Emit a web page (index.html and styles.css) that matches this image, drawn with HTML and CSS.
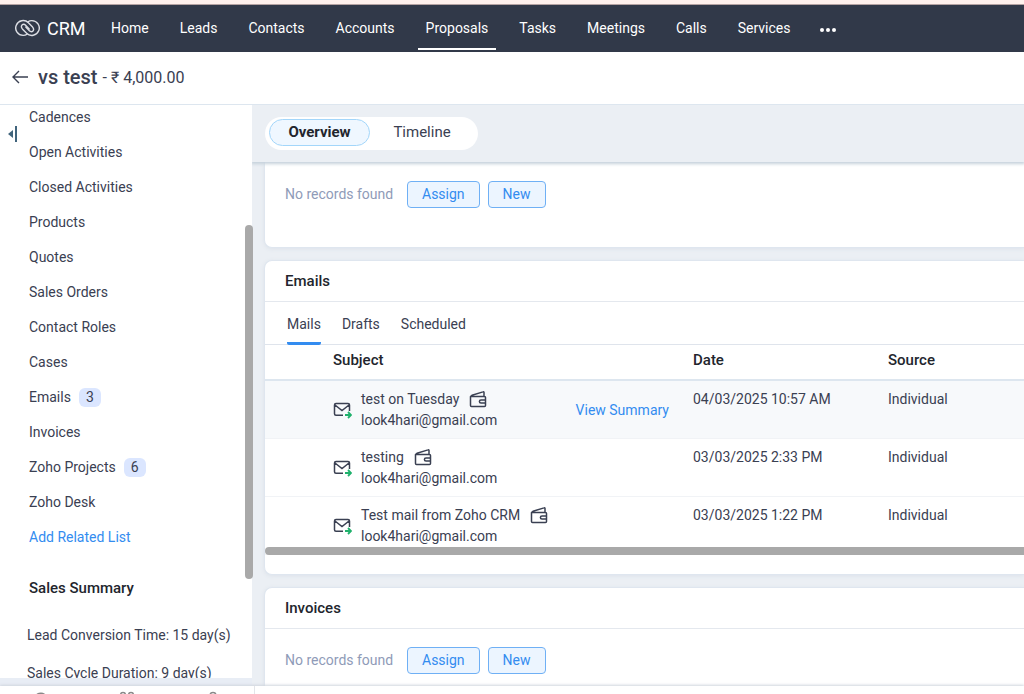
FILE: index.html
```
<!DOCTYPE html>
<html lang="en">
<head>
    <meta charset="UTF-8">
    <meta name="viewport" content="width=device-width, initial-scale=1.0">
    <title>vs test - Proposals - CRM</title>
    <link rel="stylesheet" href="styles.css">
</head>
<body>
    <!-- shared icons -->
    <svg class="sprite" aria-hidden="true">
        <symbol id="mail" viewBox="0 0 19 18">
            <path d="M10 14.200H3c-.9 0-1.500-.6-1.500-1.500V4c0-.9.6-1.500 1.500-1.500h12c.9 0 1.500.6 1.500 1.500v6M2 4l7 5.500L16 4" fill="none" stroke="#3a4052" stroke-width="1.500"/>
            <path d="M12 14h6M15 11l3 3-3 3" fill="none" stroke="#1fb16c" stroke-width="1.800"/>
        </symbol>
        <symbol id="wallet" viewBox="0 0 18 17">
            <path d="M1.500 5.500h14c.6 0 1 .4 1 1v8c0 .6-.4 1-1 1h-13c-.6 0-1-.4-1-1v-9L3 4.200l11-3.300c.6-.2 1 .1 1 .7v3.900M16 9h-4c-1 0-1.600.6-1.600 1.500S11 12 12 12h4" fill="none" stroke="#3a4052" stroke-width="1.500" stroke-linejoin="round"/>
        </symbol>
    </svg>

    <header class="navbar">
        <a href="#" class="brand">
            <svg width="25" height="18" viewBox="0 0 25 18" fill="none" stroke="#dcdee4" stroke-width="1.400" stroke-linecap="round">
                <path d="M12 15.200C10.900 16 9.600 16.400 8.200 16.400a7.400 7.400 0 1 1 5.200-12.600l4.200 4.300c2 2.200.6 4.600-1.200 4.600-.9 0-1.500-.4-2-.9L10.800 8"/>
                <path d="M13 2.800c1.100-.8 2.400-1.200 3.800-1.200a7.400 7.400 0 1 1-5.200 12.600L7.400 9.900c-2-2.200-.6-4.600 1.200-4.600.9 0 1.500.4 2 .9l3.600 3.800"/>
            </svg>
            <span>CRM</span>
        </a>
        <nav class="menu">
            <a href="#">Home</a>
            <a href="#">Leads</a>
            <a href="#">Contacts</a>
            <a href="#">Accounts</a>
            <a href="#" class="active">Proposals</a>
            <a href="#">Tasks</a>
            <a href="#">Meetings</a>
            <a href="#">Calls</a>
            <a href="#">Services</a>
        </nav>
        <button class="more" aria-label="More modules">
            <svg width="18" height="4" viewBox="0 0 18 4" fill="#fff"><circle cx="3" cy="2" r="2"/><circle cx="9" cy="2" r="2"/><circle cx="15" cy="2" r="2"/></svg>
        </button>
    </header>

    <div class="record">
        <a href="#" class="back" aria-label="Back">
            <svg width="16" height="14" viewBox="0 0 16 14" fill="none" stroke="#3a4052" stroke-width="1.400"><path d="M16 7H1M7 1L1 7l6 6"/></svg>
        </a>
        <h1>vs test</h1>
        <span class="amount">- ₹ 4,000.00</span>
    </div>

    <div class="content">
        <aside class="sidebar">
            <button class="collapse" aria-label="Hide sidebar">
                <svg width="9" height="16" viewBox="0 0 9 16" fill="#40647c"><path d="M5 4v8L0 8zM7 0h2v16H7z"/></svg>
            </button>
            <ul class="related">
                <li><a href="#">Cadences</a></li>
                <li><a href="#">Open Activities</a></li>
                <li><a href="#">Closed Activities</a></li>
                <li><a href="#">Products</a></li>
                <li><a href="#">Quotes</a></li>
                <li><a href="#">Sales Orders</a></li>
                <li><a href="#">Contact Roles</a></li>
                <li><a href="#">Cases</a></li>
                <li><a href="#">Emails</a><span class="count">3</span></li>
                <li><a href="#">Invoices</a></li>
                <li><a href="#">Zoho Projects</a><span class="count">6</span></li>
                <li><a href="#">Zoho Desk</a></li>
                <li><a href="#" class="link">Add Related List</a></li>
            </ul>
            <h3>Sales Summary</h3>
            <p class="summary">Lead Conversion Time: 15 day(s)</p>
            <p class="summary">Sales Cycle Duration: 9 day(s)</p>
            <div class="scroll-y"></div>
            <div class="fade"></div>
        </aside>

        <main class="main">
            <div class="toolbar">
                <div class="switch">
                    <button class="on">Overview</button>
                    <button>Timeline</button>
                </div>
            </div>

            <div class="cards">
                <section class="card card-first">
                    <div class="empty">
                        <span>No records found</span>
                        <button class="btn">Assign</button>
                        <button class="btn">New</button>
                    </div>
                </section>

                <section class="card">
                    <h2>Emails</h2>
                    <div class="tabs">
                        <button class="active">Mails</button>
                        <button>Drafts</button>
                        <button>Scheduled</button>
                    </div>
                    <div class="mails">
                        <table>
                            <thead>
                                <tr>
                                    <th class="col-subject">Subject</th>
                                    <th class="col-date">Date</th>
                                    <th>Source</th>
                                </tr>
                            </thead>
                            <tbody>
                                <tr class="hover">
                                    <td class="col-subject">
                                        <div class="mail">
                                            <svg class="mail-icon"><use href="#mail"/></svg>
                                            <div>
                                                <div class="title">test on Tuesday <svg class="wallet"><use href="#wallet"/></svg></div>
                                                <div>look4hari@gmail.com</div>
                                            </div>
                                            <a href="#" class="link view">View Summary</a>
                                        </div>
                                    </td>
                                    <td>04/03/2025 10:57 AM</td>
                                    <td>Individual</td>
                                </tr>
                                <tr>
                                    <td class="col-subject">
                                        <div class="mail">
                                            <svg class="mail-icon"><use href="#mail"/></svg>
                                            <div>
                                                <div class="title">testing <svg class="wallet"><use href="#wallet"/></svg></div>
                                                <div>look4hari@gmail.com</div>
                                            </div>
                                        </div>
                                    </td>
                                    <td>03/03/2025 2:33 PM</td>
                                    <td>Individual</td>
                                </tr>
                                <tr>
                                    <td class="col-subject">
                                        <div class="mail">
                                            <svg class="mail-icon"><use href="#mail"/></svg>
                                            <div>
                                                <div class="title">Test mail from Zoho CRM <svg class="wallet"><use href="#wallet"/></svg></div>
                                                <div>look4hari@gmail.com</div>
                                            </div>
                                        </div>
                                    </td>
                                    <td>03/03/2025 1:22 PM</td>
                                    <td>Individual</td>
                                </tr>
                            </tbody>
                        </table>
                        <div class="scroll-x"></div>
                    </div>
                </section>

                <section class="card">
                    <h2>Invoices</h2>
                    <div class="empty">
                        <span>No records found</span>
                        <button class="btn">Assign</button>
                        <button class="btn">New</button>
                    </div>
                </section>
            </div>
        </main>
    </div>

    <footer class="chatbar">
        <div class="chat-icons">
            <svg width="18" height="18" viewBox="0 0 18 18" fill="none" stroke="#888" stroke-width="1.500"><path d="M3 15l1-4a6 5.500 0 1 1 3 2z"/></svg>
            <svg width="18" height="18" viewBox="0 0 18 18" fill="none" stroke="#888" stroke-width="1.500"><circle cx="5" cy="4" r="2.500"/><circle cx="13" cy="4" r="2.500"/><path d="M1 14c0-6 8-6 8 0 0-6 8-6 8 0"/></svg>
            <svg width="18" height="18" viewBox="0 0 18 18" fill="none" stroke="#888" stroke-width="1.500"><circle cx="9" cy="4.500" r="3"/><path d="M2 15c0-7 14-7 14 0"/></svg>
        </div>
    </footer>
</body>
</html>
```
FILE: styles.css
```
* {
    box-sizing: border-box;
}
body {
    margin: 0;
    height: 100vh;
    display: flex;
    flex-direction: column;
    overflow: hidden;
    font-family: Roboto, "Liberation Sans", sans-serif;
    font-size: 14px;
    line-height: 21px;
    color: #3a4052;
    background-color: #fff;
}
a {
    color: inherit;
    text-decoration: none;
}
button {
    font: inherit;
    color: inherit;
    background: none;
    border: none;
    padding: 0;
    cursor: pointer;
}
h1, h2, h3, p, ul {
    margin: 0;
    padding: 0;
}
svg {
    flex-shrink: 0;
}
.sprite {
    display: none;
}
.link {
    color: #338cf0;
}

/* top bar */
.navbar {
    display: flex;
    flex-shrink: 0;
    height: 52px;
    padding-left: 15px;
    color: #fff;
    background-color: #313949;
    border-top: 4px solid #fff1ed;
    box-shadow: inset 0 1px #b5a3a3;
}
.brand {
    display: flex;
    align-items: center;
    gap: 7px;
    width: 88px;
    font-size: 18px;
}
.menu {
    display: flex;
    gap: 15px;
}
.menu a {
    padding: 14px 8px 0;
    height: 46px;
    white-space: nowrap;
}
.menu a.active {
    border-bottom: 2px solid #fff;
}
.more {
    display: flex;
    align-items: center;
    margin-left: 20px;
    padding-top: 3px;
}

/* record title */
.record {
    display: flex;
    flex-shrink: 0;
    align-items: center;
    height: 53px;
    padding: 0 12px 2px;
    border-bottom: 1px solid #dde6ef;
}
.back {
    display: flex;
    margin-right: 10px;
}
.record h1 {
    font-size: 20px;
    font-weight: 500;
    margin-right: 5px;
}
.amount {
    font-size: 16px;
}

.content {
    display: flex;
    flex: 1;
    min-height: 0;
}

/* sidebar */
.sidebar {
    position: relative;
    flex: 0 0 252px;
}
.collapse {
    position: absolute;
    left: 8px;
    top: 21px;
    display: flex;
}
.related {
    list-style: none;
    padding-left: 29px;
}
.related li {
    display: flex;
    align-items: center;
    height: 25px;
    margin-bottom: 10px;
}
.count {
    width: 22px;
    height: 19px;
    margin-left: 8px;
    line-height: 19px;
    text-align: center;
    background-color: #dbe6ff;
    border-radius: 6px;
}
.sidebar h3 {
    padding: 18px 0 26px 29px;
    font-size: 15px;
    font-weight: 500;
    color: #22252d;
}
.summary {
    padding-left: 27px;
    margin-bottom: 17px;
    white-space: nowrap;
}
.scroll-y {
    position: absolute;
    z-index: 1;
    right: -1px;
    top: 120px;
    width: 8px;
    height: 354px;
    background-color: #a9a9a9;
    border-radius: 4px;
}
.fade {
    position: absolute;
    left: 0;
    right: 0;
    bottom: 0;
    height: 8px;
    background-color: #e8edf5;
}

/* main area */
.main {
    display: flex;
    flex: 1;
    flex-direction: column;
    min-width: 0;
    overflow: hidden;
    background-color: #ebeff4;
}
.toolbar {
    position: relative;
    flex-shrink: 0;
    height: 57px;
    padding: 12px 13px;
    background-color: #ebeff4;
    box-shadow: 0 1px 3px 1px #c5d1db;
}
.switch {
    display: inline-flex;
    height: 33px;
    padding: 2px 4px;
    font-size: 15px;
    background-color: #fff;
    border-radius: 17px;
}
.switch button {
    width: 104px;
    height: 27px;
    line-height: 23px;
    border: 1px solid transparent;
    border-radius: 14px;
}
.switch .on {
    width: 101px;
    font-weight: 700;
    color: #22252d;
    background-color: #eff7ff;
    border-color: #a3d6fa;
}
.cards {
    padding-left: 12px;
}
.card {
    margin-bottom: 12px;
    background-color: #fff;
    border: 1px solid #dfe6ef;
    border-right: none;
    border-radius: 8px 0 0 8px;
    box-shadow: 0 1px 4px #dce2ea;
}
.card-first {
    height: 86px;
    padding-top: 1px;
    border-top: none;
    border-top-left-radius: 0;
}
.card h2 {
    height: 41px;
    padding-left: 20px;
    line-height: 40px;
    font-size: 15px;
    font-weight: 500;
    color: #22252d;
    border-bottom: 1px solid #e4e8ee;
}
.empty {
    display: flex;
    align-items: center;
    padding: 18px 20px 39px;
    color: #8f9bb8;
}
.empty span {
    width: 122px;
}
.btn {
    height: 27px;
    margin-right: 8px;
    padding: 0 14px;
    line-height: 23px;
    color: #338cf0;
    background-color: #ecf5ff;
    border: 1px solid #6fb0f5;
    border-radius: 4px;
}
.tabs {
    display: flex;
    gap: 21px;
    height: 43px;
    padding-left: 22px;
    border-bottom: 1px solid #dfe4ec;
}
.tabs button {
    padding-top: 5px;
    border-bottom: 3px solid transparent;
    border-radius: 2px;
    height: 43px;
}
.tabs .active {
    border-color: #338cf0;
}

/* emails table */
.mails {
    position: relative;
    height: 229px;
}
table {
    width: 100%;
    table-layout: fixed;
    border-collapse: separate;
    border-spacing: 0;
}
th {
    height: 36px;
    padding: 0 0 3px;
    font-size: 15px;
    font-weight: 500;
    text-align: left;
    color: #22252d;
    border-bottom: 2px solid #dde6ef;
}
td {
    height: 58px;
    padding: 8px 0 7px;
    vertical-align: top;
    border-bottom: 1px solid #f1f3f6;
}
.hover {
    background-color: #f7f9fb;
}
.col-subject {
    width: 428px;
    padding-left: 68px;
}
.col-date {
    width: 195px;
}
.mail {
    display: flex;
    align-items: center;
}
.mail-icon {
    width: 19px;
    height: 18px;
    margin-right: 9px;
}
.title {
    display: flex;
    align-items: center;
}
.wallet {
    width: 18px;
    height: 17px;
    margin-left: 10px;
}
.view {
    margin-left: auto;
    margin-right: 24px;
}
.scroll-x {
    position: absolute;
    left: 0;
    right: 0;
    top: 202px;
    height: 8px;
    background-color: #a9a9a9;
    border-radius: 4px 0 0 4px;
}

/* chat bar */
.chatbar {
    position: relative;
    flex-shrink: 0;
    height: 8px;
    overflow: hidden;
    background-color: #fff;
    box-shadow: 0 -1px 3px #cfd5dd;
}
.chat-icons {
    display: flex;
    justify-content: space-between;
    width: 255px;
    padding: 5px 32px;
    border-right: 1px solid #e3e5e9;
}
```
